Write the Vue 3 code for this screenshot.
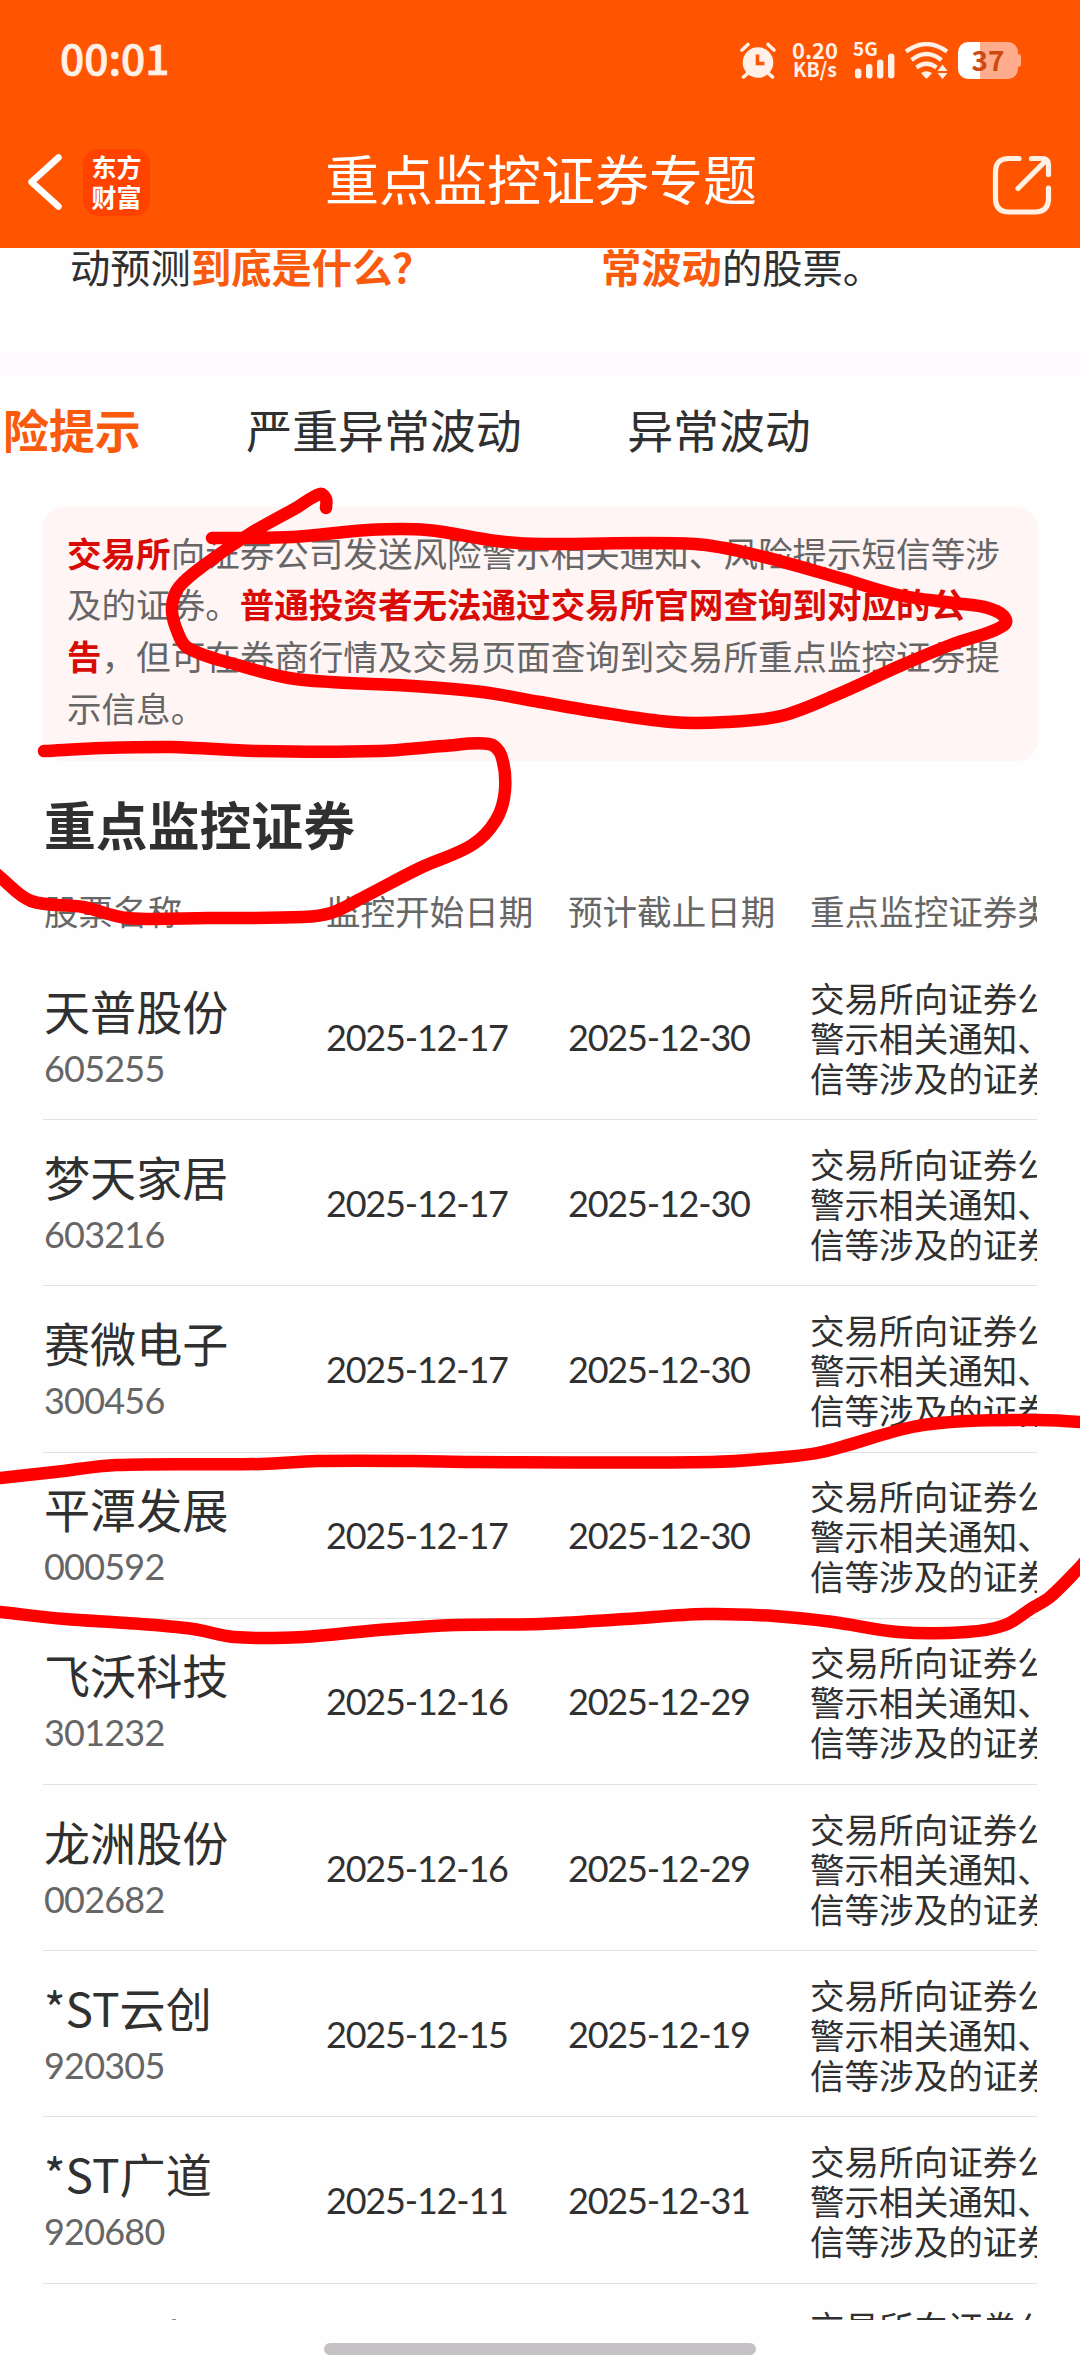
<script setup>
import { computed } from 'vue';

const tabs = [
    { label: '险提示', active: true },
    { label: '严重异常波动', active: false },
    { label: '异常波动', active: false }
];

const columns = ['股票名称', '监控开始日期', '预计截止日期', '重点监控证券类型'];

const reason = ['交易所向证券公司', '警示相关通知、', '信等涉及的证券。'];

const stocks = [
    { name: '天普股份', code: '605255', start: '2025-12-17', end: '2025-12-30' },
    { name: '梦天家居', code: '603216', start: '2025-12-17', end: '2025-12-30' },
    { name: '赛微电子', code: '300456', start: '2025-12-17', end: '2025-12-30' },
    { name: '平潭发展', code: '000592', start: '2025-12-17', end: '2025-12-30' },
    { name: '飞沃科技', code: '301232', start: '2025-12-16', end: '2025-12-29' },
    { name: '龙洲股份', code: '002682', start: '2025-12-16', end: '2025-12-29' },
    { name: '*ST云创', code: '920305', start: '2025-12-15', end: '2025-12-19' },
    { name: '*ST广道', code: '920680', start: '2025-12-11', end: '2025-12-31' }
];

// hand drawn marks, as pen positions on the screen
const marks = [
    [
        [326, 508], [326, 499], [320, 494], [296, 508], [251, 533], [207, 563], [179, 587], [172, 607],
        [176, 628], [188, 648], [241, 666], [289, 678], [331, 682], [413, 686], [482, 692],
        [540, 702], [592, 711], [671, 722], [726, 722], [781, 716], [836, 695], [902, 665],
        [953, 644], [995, 630], [1006, 620], [988, 608], [953, 603], [898, 595], [843, 579],
        [760, 556], [695, 544], [540, 544], [496, 541], [427, 530], [368, 530], [293, 537], [212, 538]
    ],
    [
        [44, 751], [103, 748], [172, 747], [258, 751], [379, 751], [444, 746], [489, 744],
        [501, 755], [505, 790], [496, 820], [472, 845], [420, 868], [362, 898], [331, 913],
        [303, 917], [207, 918], [127, 918], [83, 907], [31, 901], [0, 877], [-10, 868]
    ],
    [
        [-10, 1479], [0, 1478], [55, 1472], [117, 1465], [262, 1464], [317, 1461], [413, 1461],
        [472, 1462], [712, 1462], [774, 1458], [822, 1452], [912, 1427], [967, 1421],
        [1039, 1420], [1080, 1422], [1092, 1424]
    ],
    [
        [-10, 1611], [0, 1612], [65, 1619], [127, 1623], [193, 1629], [234, 1637], [303, 1637],
        [379, 1630], [455, 1625], [540, 1624], [626, 1619], [705, 1614], [774, 1616],
        [833, 1622], [898, 1632], [967, 1632], [1005, 1625], [1032, 1608], [1050, 1597],
        [1080, 1567], [1090, 1555]
    ]
];

function smooth(pts) {
    let d = `M${pts[0][0]} ${pts[0][1]}`;
    for (let i = 0; i < pts.length - 1; i++) {
        const p0 = pts[i - 1] || pts[i];
        const p1 = pts[i];
        const p2 = pts[i + 1];
        const p3 = pts[i + 2] || p2;
        // handles are kept short so uneven spacing doesn't overshoot
        const len = Math.hypot(p2[0] - p1[0], p2[1] - p1[1]);
        const t1 = Math.hypot(p2[0] - p0[0], p2[1] - p0[1]) || 1;
        const t2 = Math.hypot(p3[0] - p1[0], p3[1] - p1[1]) || 1;
        const k = len / 3;
        const c1 = [p1[0] + ((p2[0] - p0[0]) / t1) * k, p1[1] + ((p2[1] - p0[1]) / t1) * k];
        const c2 = [p2[0] - ((p3[0] - p1[0]) / t2) * k, p2[1] - ((p3[1] - p1[1]) / t2) * k];
        d += ` C${[...c1, ...c2, ...p2].map(n => n.toFixed(1)).join(' ')}`;
    }
    return d;
}

const markPaths = computed(() => marks.map(smooth));
</script>

<template>
    <div class="screen">
        <header class="header">
            <div class="status-bar">
                <span class="clock">00:01</span>
                <div class="status-icons">
                    <svg class="alarm" width="36" height="37" viewBox="0 0 36 37">
                        <circle cx="18" cy="20.5" r="15.3" fill="#fff0e8" />
                        <path d="M2 8 L8 2.5 M34 8 L28 2.5 M3.5 35 L8 31 M32.5 35 L28 31" stroke="#fff0e8" stroke-width="3.6" stroke-linecap="round" />
                        <path d="M17.5 12.5 V21.5 H24.5" fill="none" stroke="#ff5500" stroke-width="3.6" />
                    </svg>
                    <div class="speed">
                        <span class="speed-num">0.20</span>
                        <span class="speed-unit">KB/s</span>
                    </div>
                    <div class="signal">
                        <span class="signal-label">5G</span>
                        <svg class="signal-bars" width="42" height="26" viewBox="0 0 42 26">
                            <rect x="2" y="15.5" width="6.4" height="10" rx="3" fill="#fff0e8" />
                            <rect x="13" y="11" width="6.4" height="14.5" rx="3" fill="#fff0e8" />
                            <rect x="24" y="6.5" width="6.4" height="19" rx="3" fill="#fff0e8" />
                            <rect x="35" y="0.5" width="6.4" height="25" rx="3" fill="#fff0e8" />
                        </svg>
                    </div>
                    <svg class="wifi" width="46" height="37" viewBox="0 0 46 37">
                        <path d="M2 9.5 Q22.5 -5.5 43 9.5" fill="none" stroke="#fff0e8" stroke-width="4.2" />
                        <path d="M7.5 18 Q22.5 6 37.5 18" fill="none" stroke="#fff0e8" stroke-width="4.2" />
                        <path d="M12.5 25.5 Q22.5 18 32.5 25.5" fill="none" stroke="#fff0e8" stroke-width="4.2" />
                        <path d="M17 31 Q22.5 27.5 28 31 L23.8 35.8 Q22.5 37 21.2 35.8 Z" fill="#fff0e8" />
                        <path d="M38.5 22.5 L43.5 29 H33.5 Z M33.5 31 H43.5 L38.5 37 Z" fill="#fff0e8" />
                    </svg>
                    <div class="battery">
                        <span class="battery-text">37</span>
                    </div>
                    <span class="battery-tip"></span>
                </div>
            </div>
            <div class="nav-bar">
                <div class="nav-left">
                    <svg width="36" height="58" viewBox="0 0 36 58">
                        <path d="M31.5 4.5 L4.500 29 L31.5 53.5" fill="none" stroke="#fff" stroke-width="6.5" stroke-linecap="round" stroke-linejoin="round" />
                    </svg>
                    <div class="logo">
                        <span>东方</span>
                        <span>财富</span>
                    </div>
                </div>
                <h1 class="title">重点监控证券专题</h1>
                <svg class="share" width="60" height="60" viewBox="0 0 60 60">
                    <path
                        d="M27 3.5 H17 Q3.5 3.5 3.5 17 V43 Q3.5 57 17 57 H43 Q56.5 57 56.5 43 V33 M39.5 3.5 H50 Q56.5 3.5 56.5 10 V19.5 M54.5 5 L26 33.5"
                        fill="none" stroke="#fff0e4" stroke-width="5.2" stroke-linecap="round" />
                </svg>
            </div>
        </header>

        <main class="content">
            <section class="intro">
                <p class="intro-item">动预测<b>到底是什么？</b></p>
                <p class="intro-item"><b>常波动</b>的股票。</p>
            </section>
            <div class="divider"></div>
            <nav class="tabs">
                <span v-for="tab in tabs" :key="tab.label" class="tab" :class="{ active: tab.active }">{{ tab.label }}</span>
            </nav>

            <section class="notice">
                <b>交易所</b>向证券公司发送风险警示相关通知、风险提示短信等涉<br />及的证券。<b>普通投资者无法通过交易所官网查询到对应的公<br />告</b>，但可在券商行情及交易页面查询到交易所重点监控证券提<br />示信息。
            </section>

            <h2 class="section-title">重点监控证券</h2>

            <div class="table">
                <div class="row head">
                    <span v-for="col in columns" :key="col">{{ col }}</span>
                </div>
                <div v-for="stock in stocks" :key="stock.code" class="row">
                    <div class="stock">
                        <span class="stock-name">{{ stock.name }}</span>
                        <span class="stock-code">{{ stock.code }}</span>
                    </div>
                    <span class="date">{{ stock.start }}</span>
                    <span class="date">{{ stock.end }}</span>
                    <div class="reason">
                        <span v-for="line in reason" :key="line">{{ line }}</span>
                    </div>
                </div>
                <!-- next row, only its top edge is scrolled into view -->
                <div class="row">
                    <div class="peek"></div>
                    <span></span>
                    <span></span>
                    <div class="reason">
                        <span v-for="line in reason" :key="line">{{ line }}</span>
                    </div>
                </div>
            </div>
        </main>

        <footer class="gesture">
            <span class="gesture-bar"></span>
        </footer>

        <svg class="marks" width="1080" height="2376" viewBox="0 0 1080 2376">
            <path v-for="(d, i) in markPaths" :key="i" :d="d" />
        </svg>
    </div>
</template>

<style>
body {
    margin: 0;
    background: #fefefe;
}
</style>

<style scoped>
.screen {
    position: relative;
    display: flex;
    flex-direction: column;
    width: 1080px;
    height: 2376px;
    overflow: hidden;
    background: #fefefe;
    color: #303030;
    font-family: "Noto Sans CJK SC", sans-serif;
}

.header {
    flex: none;
    height: 248px;
    background: #ff5500;
    color: #fff;
}

.status-bar {
    display: flex;
    align-items: center;
    justify-content: space-between;
    height: 120px;
    padding: 0 59px 0 60px;
    box-sizing: border-box;
}

.clock {
    padding-bottom: 7px;
    font-size: 42.5px;
    line-height: 60px;
    font-weight: 500;
    color: #fff0e8;
    -webkit-text-stroke: 0.7px #fff0e8;
}

.status-icons {
    display: flex;
    align-items: center;
    height: 37px;
}

.speed {
    display: flex;
    flex-direction: column;
    align-items: center;
    width: 46px;
    margin-left: 16px;
    padding-bottom: 2px;
    font-weight: 700;
    color: #fff0e8;
}

.speed-num {
    font-size: 22px;
    line-height: 20px;
}

.speed-unit {
    font-size: 19.5px;
    line-height: 20px;
}

.signal {
    display: flex;
    flex-direction: column;
    width: 42px;
    height: 37px;
    margin-left: 15px;
}

.signal-label {
    height: 11px;
    font-size: 19px;
    line-height: 11px;
    font-weight: 700;
    color: #fff0e8;
}

.wifi {
    margin-left: 9px;
}

.battery {
    display: flex;
    align-items: center;
    justify-content: center;
    width: 60px;
    height: 37px;
    margin-left: 8px;
    border-radius: 10px;
    background: linear-gradient(to right, #fff 22px, #ffac8c 22px);
}

.battery-text {
    padding-bottom: 3px;
    font-size: 28px;
    line-height: 34px;
    font-weight: 700;
    color: #cc4a12;
}

.battery-tip {
    width: 3px;
    height: 13px;
    border-radius: 0 3px 3px 0;
    background: #ffac8c;
}

.nav-bar {
    display: grid;
    grid-template-columns: 1fr auto 1fr;
    align-items: center;
    height: 124px;
    padding: 0 28px 0 27px;
}

.nav-left {
    display: flex;
    align-items: center;
    gap: 20px;
}

.logo {
    display: flex;
    flex-direction: column;
    align-items: center;
    justify-content: center;
    width: 67px;
    height: 67px;
    padding-bottom: 3px;
    box-sizing: border-box;
    border-radius: 15px;
    background: #ff4200;
    font-size: 25px;
    line-height: 30px;
    font-weight: 700;
}

.title {
    margin: 0;
    padding: 0 0 8px 3px;
    font-size: 54px;
    line-height: 80px;
    font-weight: 400;
}

.share {
    justify-self: end;
    margin-top: 5px;
}

.content {
    flex: 1;
    min-height: 0;
    overflow: hidden;
}

.intro {
    display: grid;
    grid-template-columns: 531px 1fr;
    height: 104px;
    padding-left: 70px;
}

.intro-item {
    margin: 0;
    font-size: 40.3px;
    line-height: 36px;
    white-space: nowrap;
}

.intro-item b {
    color: #f95a0c;
}

.divider {
    height: 24px;
    background: #fdf9fe;
}

.tabs {
    display: flex;
    gap: 105.6px;
    height: 131px;
    padding-left: 3px;
    font-size: 45.9px;
    line-height: 105px;
    white-space: nowrap;
}

.tab.active {
    color: #f95a0c;
    font-weight: 700;
}

.notice {
    height: 254px;
    margin: 0 43px;
    padding: 19.5px 0 0 24px;
    box-sizing: border-box;
    border-radius: 20px;
    background: #fff5f5;
    font-size: 34.56px;
    line-height: 51.84px;
    white-space: nowrap;
    color: #666;
}

.notice b {
    color: #d90b06;
}

.section-title {
    margin: 0 43px 0 44px;
    height: 109px;
    font-size: 51.84px;
    line-height: 126px;
    font-weight: 700;
}

.table {
    margin: 0 43px;
    overflow: hidden;
}

.row {
    display: grid;
    grid-template-columns: 282px 242px 242px 300px;
    align-items: center;
    height: 166.2px;
    padding-left: 1px;
    box-sizing: border-box;
    border-bottom: 1px solid #e2e2e2;
    white-space: nowrap;
}

.row.head {
    height: 84px;
    padding-bottom: 5px;
    border-bottom: 0;
    font-size: 34.56px;
    color: #666;
}

.stock {
    display: flex;
    flex-direction: column;
    padding-top: 2px;
}

.stock-name {
    font-size: 46.08px;
    line-height: 60px;
}

.stock-code {
    font-family: Lato, "Noto Sans CJK SC", sans-serif;
    font-size: 36px;
    line-height: 56px;
    letter-spacing: -0.8px;
    color: #666;
}

.date {
    font-family: Lato, "Noto Sans CJK SC", sans-serif;
    font-size: 36px;
    letter-spacing: -1.2px;
}

.reason {
    display: flex;
    flex-direction: column;
    font-size: 34.56px;
    line-height: 40px;
}

.peek {
    align-self: start;
    width: 4px;
    height: 2px;
    margin: 35px 0 0 128px;
    background: #888;
}

.gesture {
    display: flex;
    flex: none;
    justify-content: center;
    height: 56px;
    padding-top: 23px;
    box-sizing: border-box;
}

.gesture-bar {
    width: 432px;
    height: 12px;
    border-radius: 6px;
    background: #c6c1c5;
}

/* pen marks lie over the whole page */
.marks {
    position: absolute;
    top: 0;
    left: 0;
    fill: none;
    stroke: #ff0000;
    stroke-width: 12.5px;
    stroke-linecap: round;
    stroke-linejoin: round;
}
</style>
